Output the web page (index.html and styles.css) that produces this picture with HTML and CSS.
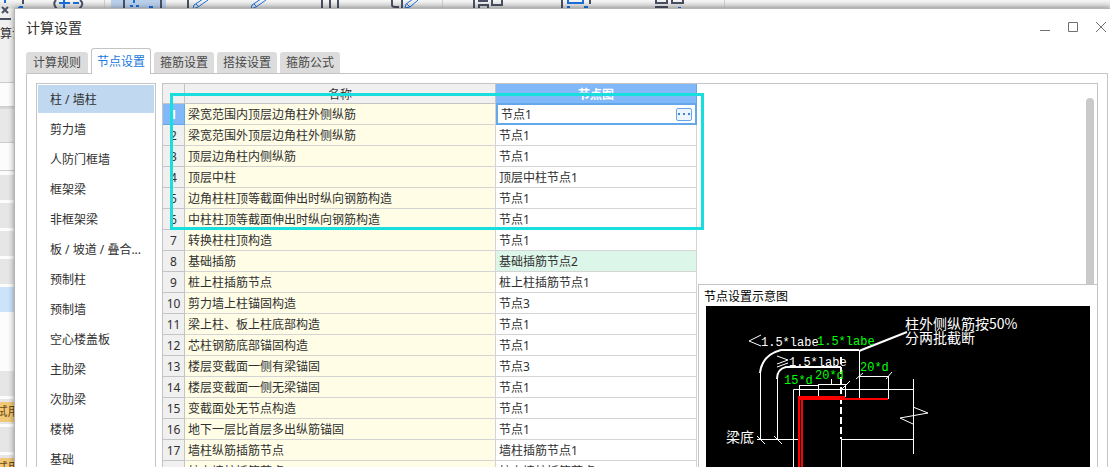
FILE: index.html
```
<!DOCTYPE html>
<html lang="zh-CN">
<head>
    <meta charset="UTF-8">
    <meta name="viewport" content="width=device-width, initial-scale=1.0">
    <title>计算设置</title>
    <link rel="stylesheet" href="styles.css">
</head>
<body>

    <!-- 主窗口 -->
    <div class="main-window">
        <div class="ribbon">
            <svg width="730" height="24" viewBox="0 0 730 24" fill="none">
                <path d="M111 0H166V24H111Z" fill="#b9cfea"/>
                <path d="M104.5 0V24M442.5 0V24M724.5 0V24" stroke="#cfcfcf"/>
                <g stroke="#4a5064" stroke-width="2">
                    <path d="M2 7L8 13M8 7L2 13M0 19H11M23 0V4"/>
                    <path d="M56 0Q52 4 57 9M80 0Q85 4 79 9"/>
                    <path d="M124 0V9M161 0V9M188 0V9M322 0V9M330 0V9M338 0V9"/>
                    <path d="M392 0V5Q392 7 395 7H399M402 0V9"/>
                    <path d="M474 0V9M478 1H488M478 5H488V9M492 0V5H502V0M479 5V9"/>
                    <path d="M562 0V9M590 0V4"/>
                    <path d="M656 0V3H667V0M672 0V3H683V0M656 9V7H667V9"/>
                </g>
                <g stroke="#1a6fdc" stroke-width="2">
                    <path d="M5 0V3M18 9L20 7H23M59 3H70M64 0V8M73 3H79"/>
                    <path d="M134 0V3M130 6H133M136 6H139M149 7H153"/>
                    <path d="M568 0V3H583V0M567 7H570M584 7H588M678 8H681"/>
                </g>
                <g stroke="#1a6fdc">
                    <path d="M203 -1L194 5L193 9L198 7L208 0M196 4L199 7"/>
                    <path d="M261 -1L252 5L251 9L256 7L266 0M254 4L257 7"/>
                    <path d="M413 -1L406 4L405 8L410 7L418 0M407 4L410 7"/>
                </g>
            </svg>
        </div>
        <div class="strip">
            <div class="strip-label">算设</div>
            <div class="strip-bar"></div>
            <div class="strip-bar tall"></div>
            <div class="strip-bar blank"></div>
            <div class="strip-row"></div>
            <div class="strip-row"></div>
            <div class="strip-row"></div>
            <div class="strip-row"></div>
            <div class="strip-row active"></div>
            <div class="strip-row none"></div>
            <div class="strip-row none"></div>
            <div class="strip-row"></div>
            <div class="strip-row"><span class="trial">试用</span></div>
            <div class="strip-row"></div>
            <div class="strip-row"><span class="trial">试用</span></div>
        </div>
    </div>

    <!-- 计算设置对话框 -->
    <div class="dialog">
        <div class="title-bar">
            <h1>计算设置</h1>
            <div class="window-buttons">
                <button type="button" aria-label="最小化"><svg width="12" height="12"><path d="M1 9.5H11"/></svg></button>
                <button type="button" aria-label="最大化"><svg width="12" height="12"><path d="M1.5 1.5H10.5V10.5H1.5Z"/></svg></button>
                <button type="button" aria-label="关闭"><svg width="12" height="12"><path d="M1 1L11 11M11 1L1 11"/></svg></button>
            </div>
        </div>

        <div class="tabs">
            <button type="button" class="tab">计算规则</button>
            <button type="button" class="tab active">节点设置</button>
            <button type="button" class="tab">箍筋设置</button>
            <button type="button" class="tab">搭接设置</button>
            <button type="button" class="tab">箍筋公式</button>
        </div>

        <div class="panel">
            <ul class="categories">
                <li class="selected">柱 / 墙柱</li>
                <li>剪力墙</li>
                <li>人防门框墙</li>
                <li>框架梁</li>
                <li>非框架梁</li>
                <li>板 / 坡道 / 叠合...</li>
                <li>预制柱</li>
                <li>预制墙</li>
                <li>空心楼盖板</li>
                <li>主肋梁</li>
                <li>次肋梁</li>
                <li>楼梯</li>
                <li>基础</li>
            </ul>

            <div class="content">
                <table class="grid">
                    <thead>
                        <tr><th class="num"></th><th class="name">名称</th><th class="node current">节点图</th></tr>
                    </thead>
                    <tbody>
                        <tr class="editing">
                            <th>1</th><td>梁宽范围内顶层边角柱外侧纵筋</td>
                            <td>
                                <div class="editor">
                                    <input type="text" value="节点1" aria-label="节点图">
                                    <button type="button" aria-label="选择节点"><svg width="12" height="2"><path d="M0 0H2V2H0ZM5 0H7V2H5ZM10 0H12V2H10Z" fill="#3a86dc"/></svg></button>
                                </div>
                            </td>
                        </tr>
                        <tr><th>2</th><td>梁宽范围外顶层边角柱外侧纵筋</td><td>节点1</td></tr>
                        <tr><th>3</th><td>顶层边角柱内侧纵筋</td><td>节点1</td></tr>
                        <tr><th>4</th><td>顶层中柱</td><td>顶层中柱节点1</td></tr>
                        <tr><th>5</th><td>边角柱柱顶等截面伸出时纵向钢筋构造</td><td>节点1</td></tr>
                        <tr><th>6</th><td>中柱柱顶等截面伸出时纵向钢筋构造</td><td>节点1</td></tr>
                        <tr><th>7</th><td>转换柱柱顶构造</td><td>节点1</td></tr>
                        <tr class="changed"><th>8</th><td>基础插筋</td><td>基础插筋节点2</td></tr>
                        <tr><th>9</th><td>桩上柱插筋节点</td><td>桩上柱插筋节点1</td></tr>
                        <tr><th>10</th><td>剪力墙上柱锚固构造</td><td>节点3</td></tr>
                        <tr><th>11</th><td>梁上柱、板上柱底部构造</td><td>节点1</td></tr>
                        <tr><th>12</th><td>芯柱钢筋底部锚固构造</td><td>节点1</td></tr>
                        <tr><th>13</th><td>楼层变截面一侧有梁锚固</td><td>节点3</td></tr>
                        <tr><th>14</th><td>楼层变截面一侧无梁锚固</td><td>节点1</td></tr>
                        <tr><th>15</th><td>变截面处无节点构造</td><td>节点1</td></tr>
                        <tr><th>16</th><td>地下一层比首层多出纵筋锚固</td><td>节点1</td></tr>
                        <tr><th>17</th><td>墙柱纵筋插筋节点</td><td>墙柱插筋节点1</td></tr>
                        <tr><th>18</th><td>桩上墙柱插筋节点</td><td>桩上墙柱插筋节点1</td></tr>
                    </tbody>
                </table>

                <div class="side">
                    <div class="scroll-area"><div class="scroll-thumb"></div></div>
                    <div class="preview">
                        <h2>节点设置示意图</h2>
                        <div class="drawing">
                            <svg width="384" height="180" viewBox="0 0 384 180" fill="none" stroke="#fff">
                                <path d="M54.5 67V133M71.5 73V133M87.5 180V83.5H207M51 133.5H93M136 133.5H207M207.5 73V148"/>
                                <path d="M135.5 133V180M51 130L59 138M68 130L76 138"/>
                                <path d="M207 101L222 107L194 112L207 118"/>
                                <path d="M54 67Q56 49 75 44H153M71 73Q71 63 80 61H135M153 45L201 26" stroke-width="2"/>
                                <path d="M153.500 44V93M182.500 70V93M153 70.500H182M180 73L186 66M150 73L157 67"/>
                                <path d="M93 79.500H112M93.500 79V91M112.500 79V91M112 78.500H139M139.500 78V91M135 84L144 75M125.500 73V78"/>
                                <path d="M135 51V133" stroke-width="2" stroke-dasharray="7 3"/>
                                <path d="M55 29L43 35L55 40M71 50L82 54L71 58M71 61L82 57"/>
                                <path d="M92 91H139M92 93H182M93 91V180M96 93V180" stroke="#f00" stroke-width="2"/>
                                <g class="label">
                                    <text x="55" y="40">1.5*labe</text>
                                    <text x="83" y="60">1.5*labe</text>
                                    <text x="111" y="39" class="green">1.5*labe</text>
                                    <text x="78" y="78" class="green">15*d</text>
                                    <text x="109" y="73" class="green">20*d</text>
                                    <text x="154" y="65" class="green">20*d</text>
                                    <text x="20" y="136" class="note">梁底</text>
                                    <text x="199" y="23" class="note">柱外侧纵筋按50%</text>
                                    <text x="199" y="37" class="note">分两批截断</text>
                                </g>
                            </svg>
                        </div>
                    </div>
                </div>

                <div class="highlight"></div>
            </div>
        </div>
    </div>

</body>
</html>
```

FILE: styles.css
```
* {
    box-sizing: border-box;
}

body {
    margin: 0;
    height: 100vh;
    overflow: hidden;
    position: relative;
    background-color: #fff;
    color: #303030;
    font-family: "Noto Sans", "Noto Sans CJK SC", sans-serif;
    font-size: 12px;
    line-height: 20px;
}

button,
input {
    font: inherit;
    color: inherit;
}

/* 主窗口 */
.ribbon {
    height: 24px;
    background: linear-gradient(#f6f6f6 0, #d8d8d8 8px, #f0f0f0 9px);
    overflow: hidden;
}

.ribbon svg {
    display: block;
}

.strip {
    width: 15px;
    overflow: hidden;
    background: #fcfcfc;
}

.strip-label {
    height: 59px;
    white-space: nowrap;
    background: #f0f0f0;
    border-bottom: 1px solid #ccc;
}

.strip-bar {
    height: 24px;
    border-bottom: 1px solid #ccc;
}

.strip-bar.tall {
    height: 36px;
    background: #e8e8e8;
    border-top: 2px solid #d8d8d8;
}

.strip-bar.blank {
    height: 28px;
    margin-bottom: 4px;
}

.strip-row {
    height: 25px;
    margin-bottom: 3px;
    padding: 3px 0;
    background: #e6e6e6;
}

.strip-row.active {
    background: #cde3fb;
}

.strip-row.none {
    background: none;
}

.trial {
    display: flex;
    justify-content: center;
    white-space: nowrap;
    background: #f0c878;
    color: #6b4a10;
}

/* 对话框 */
.dialog {
    position: absolute;
    top: 8px;
    left: 14px;
    right: 0;
    bottom: 0;
    display: flex;
    flex-direction: column;
    overflow: hidden;
    padding: 0 2px 0 11px;
    background: #fff;
    border-top: 1px solid #b4b4b4;
    border-left: 1px solid #b4b4b4;
    box-shadow: 0 0 6px rgba(0, 0, 0, 0.4);
}

.title-bar {
    display: flex;
    justify-content: space-between;
    height: 39px;
    padding: 9px 1px 0 0;
}

.title-bar h1 {
    margin: 0;
    font-size: 14px;
    font-weight: normal;
}

.window-buttons {
    display: flex;
    gap: 16px;
    height: 18px;
}

.window-buttons button {
    display: flex;
    align-items: center;
    padding: 0;
    border: none;
    background: none;
}

.window-buttons path {
    fill: none;
    stroke: #707070;
}

.tabs {
    display: flex;
    align-items: flex-end;
    gap: 3px;
    height: 26px;
    margin-bottom: -1px;
    position: relative;
}

.tab {
    width: 60px;
    height: 22px;
    padding: 0;
    border: none;
    border-bottom: 1px solid #c4c4c4;
    border-radius: 3px 3px 0 0;
    background: #dcdcdc;
    color: #484848;
    white-space: nowrap;
}

.tab:first-child {
    width: 62px;
}

.tab.active {
    height: 26px;
    border: 1px solid #c4c4c4;
    border-bottom: none;
    background: #fff;
    color: #1a78e0;
}

.panel {
    flex: 1;
    min-height: 0;
    display: flex;
    gap: 6px;
    padding: 9px 9px 0;
    border: 1px solid #c4c4c4;
    border-bottom: none;
}

.categories {
    flex: none;
    width: 120px;
    margin: 0;
    padding: 1px;
    overflow: hidden;
    list-style: none;
    border: 1px solid #c4c4c4;
    border-bottom: none;
}

.categories li {
    height: 28px;
    margin-bottom: 2px;
    padding-left: 12px;
    line-height: 30px;
    white-space: nowrap;
}

.categories .selected {
    background: #c0d8f0;
}

.content {
    flex: 1;
    min-width: 0;
    display: flex;
    position: relative;
    border: 1px solid #c4c4c4;
    border-bottom: none;
}

/* 节点表格 */
.grid {
    flex: none;
    align-self: flex-start;
    width: 534px;
    table-layout: fixed;
    border-collapse: separate;
    border-spacing: 0;
}

.grid th,
.grid td {
    height: 21px;
    padding: 2px 3px 0;
    border-right: 1px solid #d4d4d4;
    border-bottom: 1px solid #d4d4d4;
    font-weight: normal;
    line-height: 18px;
    text-align: left;
    white-space: nowrap;
}

.grid th {
    padding: 2px 0 0;
    background: #f0f0f0;
    border-color: #c4c4c4;
    text-align: center;
}

.grid thead th {
    height: 20px;
    line-height: 17px;
}

.grid .num {
    width: 22px;
}

.grid .node {
    width: 201px;
}

.grid td:nth-child(2) {
    background: #fffde6;
}

.grid .current {
    background: #80b8fa;
    border-color: #64a8ec;
    color: #fff;
    font-weight: bold;
}

.grid .editing th {
    background: #80b8fa;
    border-color: #64a8ec;
    color: #fff;
    font-weight: bold;
}

.grid .editing td:last-child {
    padding: 0;
    border: none;
}

.grid .changed td:last-child {
    background: #ddf6ea;
}

.editor {
    display: flex;
    align-items: center;
    height: 21px;
    padding: 0 3px;
    border: 2px solid #64a8ec;
    border-top-width: 1px;
}

.editor input {
    flex: 1;
    min-width: 0;
    padding: 1px 0 0;
    height: 18px;
    border: none;
    outline: none;
    background: none;
}

.editor button {
    display: flex;
    align-items: center;
    justify-content: center;
    width: 16px;
    height: 13px;
    padding: 0;
    border: 1px solid #64a8ec;
    border-radius: 2px;
    background: #eef4fc;
}

/* 示意图 */
.side {
    flex: 1;
    min-width: 0;
    display: flex;
    flex-direction: column;
    padding-left: 1px;
}

.scroll-area {
    flex: none;
    display: flex;
    justify-content: flex-end;
    height: 200px;
    padding: 14px 3px 0 0;
}

.scroll-thumb {
    width: 8px;
    background: #cacaca;
    border-radius: 4px 4px 0 0;
}

.preview {
    flex: 1;
    min-height: 0;
    display: flex;
    flex-direction: column;
    padding: 3px 7px 0;
    border-top: 1px solid #c4c4c4;
    border-left: 1px solid #c4c4c4;
}

.preview h2 {
    margin: 0 -2px;
    font-size: 12px;
    font-weight: normal;
    line-height: 18px;
    color: #000;
}

.drawing {
    flex: 1;
    min-height: 0;
    overflow: hidden;
    background: #000;
}

.drawing svg {
    display: block;
}

.label text {
    fill: #fff;
    stroke: none;
    font-family: "Liberation Mono", monospace;
    font-size: 12px;
}

.label .green {
    fill: #0f0;
}

.label .note {
    font-family: "Noto Sans CJK SC", sans-serif;
    font-size: 14px;
}

/* 标注框 */
.highlight {
    position: absolute;
    top: 9px;
    left: 7px;
    width: 534px;
    height: 137px;
    border: 3px solid #18dede;
    pointer-events: none;
}
```
